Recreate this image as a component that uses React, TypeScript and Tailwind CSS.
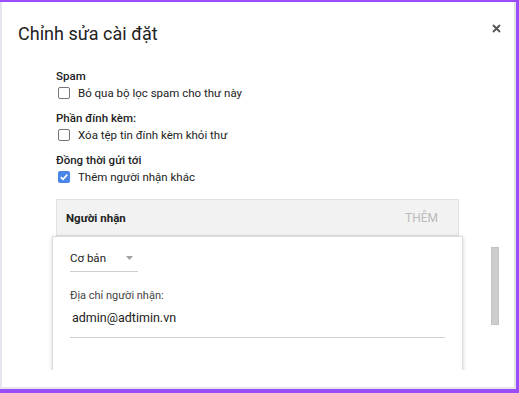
import { ReactNode } from "react";

function Box({ checked }: { checked?: boolean }) {
  if (checked) {
    return (
      <span className="w-[12px] h-[12px] rounded-[2px] bg-[#4a86e8] flex items-center justify-center shrink-0">
        <svg width="10" height="10" viewBox="0 0 10 10">
          <path d="M1.8 5.2 L4 7.3 L8.3 2.6" fill="none" stroke="#fff" strokeWidth="1.6" />
        </svg>
      </span>
    );
  }
  return <span className="w-[12px] h-[12px] rounded-[2px] border-[1.5px] border-[#757575] bg-white shrink-0" />;
}

function Group({ label, text, checked, first }: { label: string; text: ReactNode; checked?: boolean; first?: boolean }) {
  return (
    <div className={first ? "" : "mt-[9px]"}>
      <p className="text-[11.5px] leading-[16px] font-medium text-[#222]">{label}</p>
      <div className="flex items-center gap-[8px] h-[17px] pl-[2px]">
        <Box checked={checked} />
        <span className="text-[11.5px] leading-[16px] text-[#222]">{text}</span>
      </div>
    </div>
  );
}

export default function App() {
  return (
    <div className="w-[519px] h-[393px] bg-[#9a4dfd] pt-[2px] pr-[3px] pb-[4px] font-['Roboto',sans-serif]">
      <div className="h-full bg-white border-l-2 border-l-[#e6e4ee] border-r-2 border-r-[#e2e2e2] border-b-2 border-b-[#e6e6e6] flex flex-col">
        <div className="flex items-start justify-between pt-[20px] pl-[16px] pr-[13px]">
          <h1 className="text-[18px] leading-[24px] text-[#222]">Chỉnh sửa cài đặt</h1>
          <svg width="9" height="9" viewBox="0 0 9 9" className="mt-[2px]">
            <path d="M1 1 L8 8 M8 1 L1 8" stroke="#555" strokeWidth="1.8" />
          </svg>
        </div>

        <div className="flex items-start h-[324px] overflow-hidden pl-[54px]">
          <div className="w-[403px] mt-[22px]">
            <Group first label="Spam" text="Bỏ qua bộ lọc spam cho thư này" />
            <Group label="Phần đính kèm:" text="Xóa tệp tin đính kèm khỏi thư" />
            <Group label="Đồng thời gửi tới" text="Thêm người nhận khác" checked />

            <div className="mt-[14px] h-[37px] bg-[#f2f2f2] border border-[#e2e2e2] flex items-center justify-between pl-[9px] pr-[20px]">
              <span className="text-[11.5px] leading-[16px] font-bold text-[#222]">Người nhận</span>
              <span className="text-[12px] leading-[16px] text-[#bbbbbb]">THÊM</span>
            </div>

            <div className="-mx-[4px] h-[200px] bg-white border border-[#dddddd] shadow-[0_1px_4px_rgba(0,0,0,0.18)] pt-[13px] pl-[17px] pr-[17px]">
              <div className="w-[68px] flex items-center justify-between border-b border-[#cfcfcf] pb-[5px]">
                <span className="text-[11.5px] leading-[16px] text-[#222]">Cơ bản</span>
                <svg width="7" height="4" viewBox="0 0 7 4" className="mr-[5px]">
                  <path d="M0 0 L7 0 L3.5 4 Z" fill="#a0a0a0" />
                </svg>
              </div>
              <p className="mt-[17px] text-[11px] leading-[14px] text-[#444]">Địa chỉ người nhận:</p>
              <div className="mt-[2px] border-b border-[#cfcfcf] pb-[8px] pl-[2px]">
                <span className="text-[12.5px] leading-[16px] text-[#222]">admin@adtimin.vn</span>
              </div>
            </div>
          </div>
          <div className="ml-[32px] mt-[201px] w-[8px] h-[78px] bg-[#cdcdcd] border border-[#c2c2c2]" />
        </div>
      </div>
    </div>
  );
}
